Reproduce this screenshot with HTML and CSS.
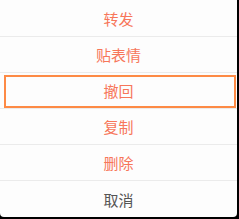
FILE: index.html
```html
<!DOCTYPE html>
<html lang="zh">
<head>
    <meta charset="UTF-8">
    <meta name="viewport" content="width=device-width, initial-scale=1.0">
    <title>消息操作</title>
    <link rel="stylesheet" href="styles.css">
</head>
<body>

<div class="sheet">
    <div class="item">转发</div>
    <div class="item">贴表情</div>
    <div class="item focus">撤回</div>
    <div class="item">复制</div>
    <div class="item">删除</div>
    <div class="item cancel">取消</div>
</div>

</body>
</html>
```

FILE: styles.css
```css
body {
    margin: 0;
    padding: 0;
    background: #000;
    font-family: "Noto Sans CJK SC", "Noto Sans", sans-serif;
}
.sheet {
    width: 237px;
    height: 217px;
    box-sizing: border-box;
    padding-top: 1px;
    background: #fdfdfd;
    border-radius: 0 0 4px 4px;
    display: flex;
    flex-direction: column;
}
.item {
    position: relative;
    height: 36px;
    box-sizing: border-box;
    border-bottom: 1px solid #ebebeb;
    display: flex;
    align-items: center;
    justify-content: center;
    font-size: 15px;
    color: #f7765a;
}
.item.cancel {
    border-bottom: none;
    color: #555;
}
.item.focus::after {
    content: "";
    position: absolute;
    left: 4px;
    right: 1px;
    top: 2px;
    bottom: 0;
    border: 2px solid #fd8a45;
}
```
